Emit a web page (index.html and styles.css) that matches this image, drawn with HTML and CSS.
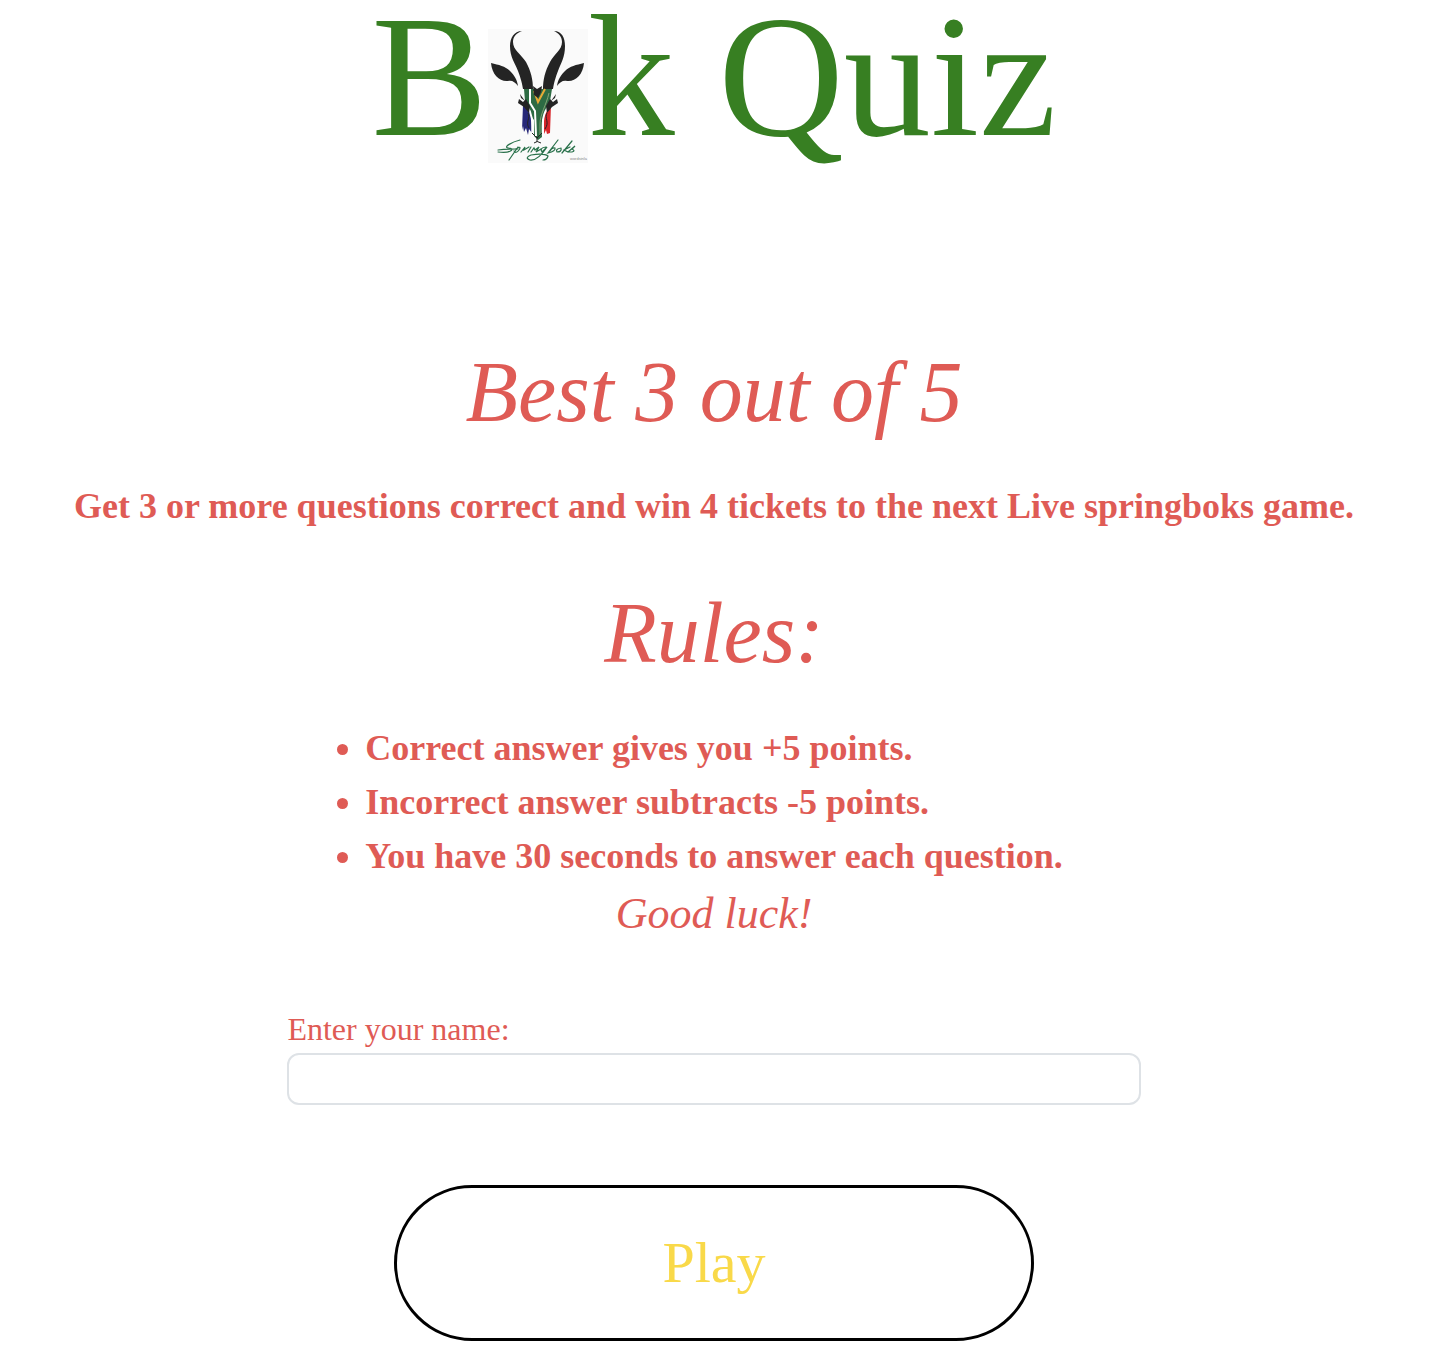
FILE: index.html
```html
<!DOCTYPE html>
<html lang="en">
<head>
<meta charset="utf-8">
<meta name="viewport" content="width=device-width, initial-scale=1">
<title>Bok Quiz</title>
<link rel="stylesheet" href="styles.css">
</head>
<body>
<header>
  <h1 class="title">B<svg class="logo" viewBox="0 0 100 134" role="img" aria-label="Springboks">
    <rect width="100" height="134" fill="#fafafa"/>
    <g fill="#242424">
      <path d="M34 2C26 2 22 9 22 17C22 28 27 34 30 42C33 50 34 54 35 60L45 60C45 51 43 42 38 33C33 25 25 21 25 13C25 7 29 4 34 2Z"/>
      <path d="M66 2C74 2 77 9 77 17C77 28 73 34 70 42C67 50 66 54 65 60L55 60C55 51 57 42 62 33C66 25 74 21 74 13C74 7 70 4 66 2Z"/>
      <path d="M3 34C11 36 17 37 22 42C26 46 29 50 30 57C27 53 24 51 20 52C12 53 4 46 3 34Z"/>
      <path d="M96 34C88 36 82 37 77 42C73 46 70 50 69 57C72 53 75 51 79 52C87 53 95 46 96 34Z"/>
    </g>
    <path d="M36 60H64L62 72C60 79 57 86 54 91V108L50 111L46 107V91C42 86 38 79 37 72Z" fill="#2d6b43"/>
    <path d="M42 60L42 74L47 82L48 107" fill="none" stroke="#fff" stroke-width="2"/>
    <path d="M46 62L50 73L57 60" fill="none" stroke="#e6aa36" stroke-width="2"/>
    <path d="M45 57L49 60L54 57L53 63L50 69L46 66Z" fill="#242424"/>
    <path d="M61 64C58 77 52 85 52 95V106" fill="none" stroke="#85a276" stroke-width="1"/>
    <path d="M35 76L43 83L44 104L41 100L40 106L38 99L36 103L35 97L34 101Z" fill="#262778"/>
    <path d="M63 76L56 86V105L58 101L59 105L62 104Z" fill="#d8272b"/>
    <path d="M39 77C44 84 45 92 44 108M61 77C55 84 54 92 55 108" fill="none" stroke="#fff" stroke-width="2"/>
    <path d="M31 70L35 73L38 70L42 77L41 84L36 78L30 74ZM69 70L65 73L62 70L58 77L59 84L64 78L70 74ZM32 65L37 72L33 69ZM68 65L63 72L67 69Z" fill="#242424"/>
    <path d="M40 84C43 89 37 93 41 99M59 84C56 89 62 93 57 100M44 104L49 109L54 104M49 108V113M46 114Q49 111 53 114" fill="none" stroke="#242424" stroke-width="1"/>
    <g fill="none" stroke="#28704a" stroke-width="1.2" stroke-linecap="round">
      <path d="M32 111C24 113 15 118 20 119C28 119 23 125 10 123M10 121Q18 120 30 120"/>
      <path d="M30 118L21 131M28 120Q34 116 31 121Q28 125 26 122M33 123L37 118L36 121L41 118M40 123L43 118M43 123L46 119L47 121L51 118L48 123L53 120"/>
      <path d="M58 118Q51 119 54 123L59 118Q50 132 42 131Q36 129 43 126Q56 124 60 127Q59 131 55 131"/>
      <path d="M70 111L60 124Q68 122 67 119Q64 118 62 122M73 119Q67 120 69 123Q74 123 73 119M84 112L74 124M82 118L76 121L80 123L87 117L84 120Q88 122 84 123L80 123"/>
    </g>
    <text class="logo-credit" x="82" y="131">wordsinla</text>
  </svg>k Quiz</h1>
</header>
<main>
  <h2 class="script">Best 3 out of 5</h2>
  <p class="prize">Get 3 or more questions correct and win 4 tickets to the next Live springboks game.</p>
  <h2 class="script">Rules:</h2>
  <ul class="rules">
    <li>Correct answer gives you +5 points.</li>
    <li>Incorrect answer subtracts -5 points.</li>
    <li>You have 30 seconds to answer each question.</li>
  </ul>
  <p class="script luck">Good luck!</p>
  <form class="entry">
    <label class="name-label" for="name">Enter your name:</label>
    <input class="name-input" id="name" type="text">
    <button class="play" type="button">Play</button>
  </form>
</main>
</body>
</html>
```
FILE: styles.css
```css
* {
  box-sizing: border-box;
}

body {
  margin: 0;
  padding: 0 9px 18px 3px;
  background: #fff;
  color: #df5b55;
  font-family: "Times New Roman", "Liberation Serif", serif;
  text-align: center;
}

.title {
  margin: 0 0 162px;
  color: #377f22;
  font-size: 174px;
  font-weight: 400;
  line-height: 154px;
  white-space: nowrap;
}

.logo {
  width: 100px;
  height: 134px;
  vertical-align: -28px;
}

.logo-credit {
  fill: #888;
  font: 4px "Liberation Sans", sans-serif;
}

.script {
  margin: 0;
  font-family: "Apple Chancery", "Z003", "URW Chancery L", "Liberation Serif", serif;
  font-size: 86px;
  font-style: italic;
  font-weight: 400;
  line-height: 134px;
}

.prize {
  margin: 20px 0 33px;
  font-size: 36px;
  font-weight: 700;
  line-height: 54px;
}

.rules {
  width: fit-content;
  margin: 21px auto 0;
  padding: 0;
  font-size: 36px;
  font-weight: 700;
  line-height: 54px;
  text-align: left;
}

.luck {
  font-size: 44px;
  line-height: 62px;
}

.entry {
  display: flex;
  flex-direction: column;
  align-items: flex-start;
  width: 60%;
  margin: 60px auto 0;
}

.name-label {
  font-size: 32px;
  line-height: 48px;
}

.name-input {
  width: 100%;
  height: 52px;
  padding: 8px 16px;
  border: 2px solid #dee2e6;
  border-radius: 12px;
  background: #fff;
  color: inherit;
  font: inherit;
  font-size: 32px;
}

.play {
  align-self: center;
  width: 75%;
  margin-top: 80px;
  padding: 43px 24px;
  border: 3px solid #000;
  border-radius: 78px;
  background: #fff;
  color: #f9d949;
  font: inherit;
  font-size: 58px;
  line-height: 64px;
}
```
